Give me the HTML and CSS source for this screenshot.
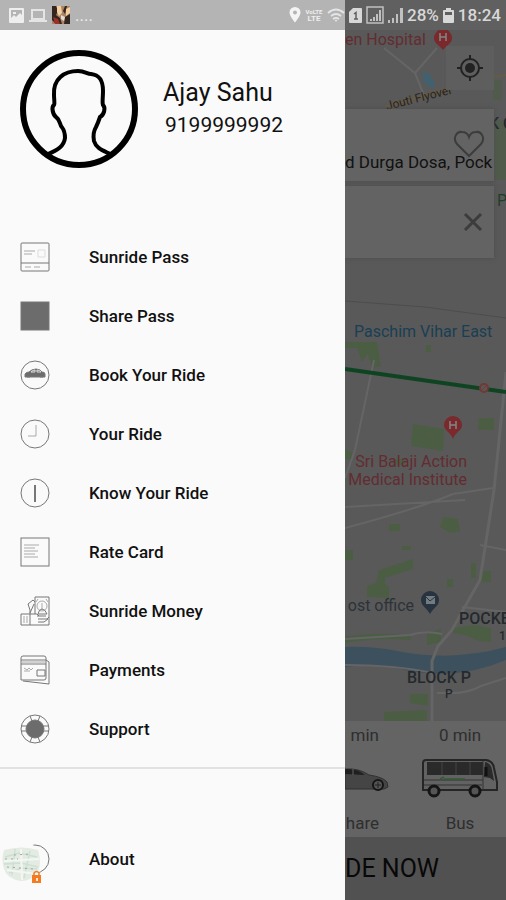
FILE: index.html
```html
<!DOCTYPE html>
<html lang="en">
<head>
    <meta charset="UTF-8">
    <meta name="viewport" content="width=device-width, initial-scale=1.0">
    <title>Sunride</title>
    <link rel="stylesheet" href="styles.css">
</head>
<body>
    <div class="app">
        <header class="status">
            <div class="status-left">
                <svg width="15" height="15" viewBox="0 0 15 15"><path fill="#eee" fill-rule="evenodd" d="M1 0h13q1 0 1 1v13q0 1-1 1H1q-1 0-1-1V1q0-1 1-1zM2 2v8l3-3 2 2 4-4 2 2V2z"/><path fill="#eee" d="M4 4h3v2H4z"/></svg>
                <svg width="18" height="15" viewBox="0 0 18 15"><path fill="none" stroke="#e4e4e4" stroke-width="2" d="M3 2h12v9H3z"/><path fill="#e4e4e4" d="M0 12h18v2H0z"/></svg>
                <svg width="18" height="18" viewBox="0 0 18 18"><path fill="#a98566" d="M0 0h18v18H0z"/><path fill="#34251f" d="M0 0h4l2 5-2 4 4 3 2 6H4L0 14zM13 0h2l-2 8-2-3zM13 11l5-3v10h-6z"/><path fill="#f3cfa2" d="M5 0h4l1 7-3 3-2-4zM14 3l4-2v6l-4 3z"/><path fill="#9d302b" d="M1 11l5 2 2 5H3z"/><path fill="#e8ddd4" d="M9 9l4 2-1 4-3-2z"/></svg>
                <span class="dots">....</span>
                <svg class="pin" width="12" height="16" viewBox="0 0 12 16"><path fill="#f4f4f4" fill-rule="evenodd" d="M6 0a5.500 5.500 0 0 1 5.500 5.500C11.500 9 6 15.500 6 15.500S.5 9 .5 5.500A5.500 5.500 0 0 1 6 0zm0 3.500a2 2 0 1 0 0 4 2 2 0 0 0 0-4z"/></svg>
                <span class="lte"><span>VoLTE</span><span>LTE</span></span>
                <svg width="18" height="15" viewBox="0 0 18 15"><g fill="none" stroke="#e4e4e4" stroke-width="1.800"><path d="M1 5q8-7 16 0M4 8q5-4 10 0M6 11q3-2 6 0"/></g><path fill="#e4e4e4" d="M7.500 12h3L9 14z"/></svg>
            </div>
            <div class="status-right">
                <svg width="13" height="15" viewBox="0 0 13 15"><path fill="#d8d8d8" d="M4 0h8q1 0 1 1v13q0 1-1 1H1q-1 0-1-1V4z"/><path fill="none" stroke="#606060" stroke-width="1.500" d="M5 6l2-1.500V11M5 11h4"/></svg>
                <svg width="18" height="18" viewBox="0 0 18 18"><path fill="none" stroke="#c0c0c0" stroke-width="1.500" d="M1 1h16v16H1z"/><path fill="#c0c0c0" d="M4 13h2v2H4zM7 11h2v4H7zM10 8h2v7h-2zM13 4h2v11h-2z"/></svg>
                <svg width="15" height="15" viewBox="0 0 15 15"><path fill="#c0c0c0" d="M0 12h2v3H0zM4 10h2v5H4zM8 6h2v9H8zM12 0h3v15h-3z"/></svg>
                <span>28%</span>
                <svg width="11" height="15" viewBox="0 0 11 15"><path fill="#d8d8d8" fill-rule="evenodd" d="M3 0h5v2h2q1 0 1 1v11q0 1-1 1H1q-1 0-1-1V3q0-1 1-1h2zM2 4v3h7V4z"/></svg>
                <span>18:24</span>
            </div>
        </header>

        <nav class="drawer">
            <div class="profile">
                <svg class="avatar" width="118" height="118" viewBox="0 0 118 118">
                    <circle cx="59" cy="59" r="56" fill="none" stroke="#000" stroke-width="6"/>
                    <path fill="none" stroke="#000" stroke-width="4" d="M28 104C38 100 44 96 45 88C45 80 43 79 41 76C39 71 39 69 36 67C33 65 31 57 34 55C35 53 34 50 34 45C33 29 44 21 58 21C65 21 67 24 71 24C80 25 83 31 83 41C83 48 82 52 83 55C86 58 84 65 80 67C79 70 78 73 76 77C73 82 73 86 74 91C76 98 82 100 90 104"/>
                </svg>
                <div class="profile-text">
                    <div class="name">Ajay Sahu</div>
                    <div class="phone">9199999992</div>
                </div>
            </div>

            <div class="menu">
                <a class="item" href="#">
                    <svg class="icon" viewBox="0 0 30 30"><rect x="1" y="1" width="28" height="28" rx="1"/><path d="M1 21h28"/><path class="faint" d="M4 9h11M4 12h8M5 25h6M14 25h6"/><path class="pale" d="M18 8h7v7h-7z"/></svg>
                    Sunride Pass
                </a>
                <a class="item" href="#">
                    <svg class="icon" viewBox="0 0 30 30"><rect class="solid" x="1" y="1" width="28" height="28"/></svg>
                    Share Pass
                </a>
                <a class="item" href="#">
                    <svg class="icon" viewBox="0 0 30 30"><circle cx="15" cy="15" r="14"/><path class="solid" d="M5 14q1-2 4-2 3-3 7-3 4 0 6 3 3 0 3 2v3H5z"/><path class="pale" d="M11 12q2-2 4-2v2zM17 10q3 0 4 2h-4z"/><path d="M7 17h3M20 17h3"/></svg>
                    Book Your Ride
                </a>
                <a class="item" href="#">
                    <svg class="icon" viewBox="0 0 30 30"><circle cx="15" cy="15" r="14"/><path class="faint" d="M16 6v11H8"/></svg>
                    Your Ride
                </a>
                <a class="item" href="#">
                    <svg class="icon" viewBox="0 0 30 30"><circle cx="15" cy="15" r="14"/><path class="bold" d="M15 7v17"/></svg>
                    Know Your Ride
                </a>
                <a class="item" href="#">
                    <svg class="icon" viewBox="0 0 30 30"><rect x="1" y="1" width="28" height="28"/><path class="faint" d="M4 8h15M4 11h11M4 14h14M4 17h11M4 20h14"/></svg>
                    Rate Card
                </a>
                <a class="item" href="#">
                    <svg class="icon" viewBox="0 0 30 30"><path d="M15 18V1h14v28H1V18h9v-4l-2-6 5-4 2 2M10 17l4-9M10 18v11M10 18h7l2 2"/><circle class="faint" cx="22" cy="10" r="5"/><path class="faint" d="M18 3l-2 3M26 3l2 3M22 7v6M4 20v7M7 20v7"/><path d="M18 18q1-5 4-5t5 5zM17 20h9M18 23h9l2-2M18 26h6l4-3"/></svg>
                    Sunride Money
                </a>
                <a class="item" href="#">
                    <svg class="icon" viewBox="0 0 30 30"><path d="M1 3q0-2 2-2h21q2 0 2 2v20q0 2-2 2H1zM1 5h25M1 9h25M26 5l3 2v22L3 26"/><path class="faint" d="M1 7h25M4 13l3 2 2-2 2 2 2-2M4 16h6"/><path d="M17 15h8v6h-8z"/></svg>
                    Payments
                </a>
                <a class="item" href="#">
                    <svg class="icon" viewBox="0 0 30 30"><circle cx="15" cy="15" r="14"/><circle class="solid" cx="15" cy="15" r="9"/><path d="M1 12h5M1 17h5M24 12h5M24 17h5M10 2l2 5M20 2l-2 5M10 28l2-5M20 28l-2-5"/></svg>
                    Support
                </a>
            </div>

            <div class="menu-bottom">
                <a class="item" href="#">
                    <svg class="icon" viewBox="0 0 30 30"><circle cx="15" cy="15" r="14"/></svg>
                    About
                    <!-- floating map bubble -->
                    <svg class="bubble" width="44" height="44" viewBox="0 0 44 44"><circle cx="20" cy="21" r="20" fill="#fafafa"/><path fill="#e3ebe3" d="M2 9q18-5 34 0 4 13 0 22-7 9-17 9Q5 38 2 28-1 18 2 9z"/><path fill="none" stroke="#cde0d2" stroke-width="1.500" d="M3 16l14-4 18 4M2 23l17-1 17 4M7 32l12-5 16 1M13 8l-3 26M28 10l-6 27"/><path fill="none" stroke="#f4f6f4" stroke-width="2" d="M2 20l35-2M5 29l30 4M19 8l1 31"/><path fill="none" stroke="#9eaaa1" stroke-dasharray="2 4" d="M3 18h13M5 26l27 2M12 14l16-1"/><path fill="#f47b20" d="M30 34h9v8h-9z"/><path fill="none" stroke="#f47b20" stroke-width="1.500" d="M32 34v-2q2.500-3 5 0v2"/><path fill="#ffe6cf" d="M34 37h2v3h-2z"/></svg>
                </a>
            </div>
        </nav>

        <main class="ride">
            <section class="map">
                <svg class="map-art" viewBox="0 0 161 691" preserveAspectRatio="xMinYMin slice">
                    <rect width="161" height="691" fill="#595959"/>
                    <!-- parks -->
                    <g fill="#4b5e44">
                        <path d="M148 50h9l-1 20h-8zM149 90h12v60h-12z" opacity=".6"/>
                        <path d="M0 312h32l4 24-9 2-4-14-6 8-5-14H0zM68 394l31 5-1 22-32-5zM134 388h15v12h-16zM0 420l7 2v7H0zM81 315h5v7h-5zM48 429h12v6H48z"/>
                        <path d="M98 487l15 2 2 12-10 2-10-6zM44 494h11v7H44zM34 540l34-11v10l-28 9v6l4 3v11l-22-1v-11l9-3zM57 516h9v4h-9zM136 541h10v11h-10zM126 533h5v15h-5zM102 549h6v8h-6zM0 520h8v10H0z"/>
                        <path d="M0 607q35-6 66-1v4q-33-3-66 3zM82 603l14-4v13l-14 3zM108 598l22-3 16 3v14l-12-1-14-6-12-2zM65 664h18v12l-18-3zM39 682l43-2v11H39z"/>
                    </g>
                    <!-- canal -->
                    <path fill="#3d505e" d="M0 617q25-1 52 4 55 11 109-4v13q-52 22-105 9-29-6-56-2z"/>
                    <path fill="#43606f" d="M77 42l8 2 5 10-2 5-9-6z"/>
                    <!-- roads -->
                    <g fill="none" stroke="#656565" stroke-width="2">
                        <path d="M39 18l31 25 22-25M70 43l9 22M29 330L10 420 0 448"/>
                        <path stroke-width="3" d="M161 342l-12 118-14 90-8 14-20 36-14 16-6 15v60"/>
                        <path d="M0 498q75-20 108-34l40-6M0 609l65-4q15-5 32-1M117 577l44 5M135 515l26 5M0 635q50 0 88 8M92 663h16q15 0 28-7l25-8M0 477l120-7"/>
                    </g>
                    <path fill="none" stroke="#4d4d4d" d="M0 271l80 6 81 11"/>
                    <path fill="none" stroke="#665b45" stroke-width="2" d="M40 77q36-10 67-20 25-8 54-12"/>
                    <path fill="none" stroke="#0f4422" stroke-width="4" d="M0 339l161 23"/>
                    <circle cx="139" cy="358" r="4" fill="#595959" stroke="#733735" stroke-width="2"/>
                    <path stroke="#733735" d="M137 360l4-4"/>
                    <!-- pins -->
                    <path fill="#7a292c" d="M98-1a9 9 0 0 1 9 9c0 5-4 6-9 12-5-6-9-7-9-12a9 9 0 0 1 9-9zM108 386a9 9 0 0 1 9 9c0 6-6 6-9 14-3-8-9-8-9-14a9 9 0 0 1 9-9z"/>
                    <path fill="none" stroke="#858585" stroke-width="1.500" d="M95 3v8M101 3v8M95 7h6M105 391v8M111 391v8M105 395h6"/>
                    <path fill="#27333f" d="M85 561a9 9 0 0 1 9 9c0 6-6 8-9 14-3-6-9-8-9-14a9 9 0 0 1 9-9z"/>
                    <path fill="#727c80" d="M81 566h9v8h-9z"/>
                    <path fill="none" stroke="#27333f" d="M81 567l4 4 5-4"/>
                    <!-- labels -->
                    <g class="map-label">
                        <text class="red" x="0" y="15">en Hospital</text>
                        <text class="small" x="42" y="80" transform="rotate(-14 42 80)">Jouti Flyover</text>
                        <text class="dark" x="144" y="99">K C</text>
                        <text class="green" x="152" y="176">P</text>
                        <text class="blue" x="9" y="307">Paschim Vihar East</text>
                        <text class="red" x="122" y="437" text-anchor="end">Sri Balaji Action</text>
                        <text class="red" x="122" y="455" text-anchor="end">Medical Institute</text>
                        <text class="slate" x="69" y="581" text-anchor="end">ost office</text>
                        <text class="dark" x="114" y="594">POCKE</text>
                        <text class="dark small-plain" x="154" y="610">1</text>
                        <text class="dark" x="62" y="653">BLOCK P</text>
                        <text class="dark small-plain" x="100" y="668">P</text>
                    </g>
                </svg>
                <div class="map-top">
                    <button class="locate" aria-label="My location">
                        <svg width="28" height="28" viewBox="0 0 28 28"><circle cx="14" cy="14" r="9" fill="none" stroke="#222" stroke-width="2"/><circle cx="14" cy="14" r="5" fill="#222"/><path stroke="#222" stroke-width="2" d="M14 1v5M14 22v5M1 14h5M22 14h5"/></svg>
                    </button>
                    <div class="place pickup">
                        <input type="text" aria-label="Pickup" value="d Durga Dosa, Pock">
                        <button class="heart" aria-label="Favourite">
                            <svg width="32" height="28" viewBox="0 0 32 28"><path fill="none" stroke="#3c3c3c" stroke-width="2" d="M16 26L4 14C-1 8 4 1 9 2c4 0 6 2 7 5 1-3 3-5 7-5 5-1 10 6 5 12z"/></svg>
                        </button>
                    </div>
                    <div class="place drop">
                        <input type="text" aria-label="Drop">
                        <button class="clear" aria-label="Clear">
                            <svg width="20" height="20" viewBox="0 0 20 20"><path stroke="#3c3c3c" stroke-width="3" d="M2 2l16 16M18 2L2 18"/></svg>
                        </button>
                    </div>
                </div>
            </section>
            <section class="types">
                <button class="type share">
                    <span>min</span>
                    <svg width="44" height="40" viewBox="0 0 44 40"><path fill="#454545" stroke="#303030" d="M0 10q14-1 24 6 14 2 18 7l1 5-4 2H0z"/><path fill="#1f1f1f" d="M0 10q12-1 20 6L0 15z"/><path stroke="#656565" d="M8 10v6"/><circle cx="33" cy="26" r="5" fill="#555" stroke="#151515" stroke-width="2"/><path stroke="#222" d="M30 26h6M33 23v6"/></svg>
                    <span>hare</span>
                </button>
                <button class="type">
                    <span>0 min</span>
                    <svg width="76" height="40" viewBox="0 0 76 40"><path fill="#626262" stroke="#252525" stroke-width="2" d="M4 1h60q7 1 8 8l3 14v8H1V4q0-3 3-3z"/><path fill="#2a2a2a" d="M5 3h56v13H5zM63 3q6 1 7 8l2 11-4-3-6-1z"/><path stroke="#444" d="M20 3v13M34 3v13M48 3v13"/><path stroke="#333" d="M2 21h59M61 2v29M2 26h58"/><path stroke="#315c35" stroke-width="1.500" d="M18 20l4-2M22 20h21"/><path stroke="#111" stroke-width="3" d="M64 8v9"/><g fill="#555" stroke="#151515" stroke-width="3"><circle cx="12" cy="32" r="5"/><circle cx="53" cy="32" r="5"/></g></svg>
                    <span>Bus</span>
                </button>
            </section>
            <button class="ride-now">DE NOW</button>
        </main>
    </div>
</body>
</html>
```
FILE: styles.css
```css
* {
    box-sizing: border-box;
}

body {
    margin: 0;
    font-family: Roboto, "Liberation Sans", sans-serif;
    color: #111;
}

button,
input {
    border: none;
    background: none;
    padding: 0;
    font: inherit;
    color: inherit;
}

button {
    cursor: pointer;
}

svg {
    display: block;
    flex-shrink: 0;
}

.app {
    display: grid;
    grid-template-columns: 15fr 7fr;
    grid-template-rows: 30px 1fr;
    min-height: 100vh;
}

/* status bar */
.status {
    grid-column: 1 / 3;
    display: grid;
    grid-template-columns: subgrid;
}

.status-left,
.status-right {
    display: flex;
    align-items: center;
    min-width: 0;
}

.status-left {
    background-color: #b4b4b4;
    gap: 5px;
    padding-left: 9px;
}

.dots {
    color: #eee;
    font-size: 17px;
}

.pin {
    margin-left: auto;
}

.lte {
    display: flex;
    flex-direction: column;
    align-items: center;
    width: 16px;
    color: #eee;
    font-size: 8px;
    font-weight: 700;
    line-height: 7px;
}

.lte span:first-child {
    font-size: 6px;
}

.status-right {
    background-color: #606060;
    color: #d8d8d8;
    font-size: 17px;
    font-weight: 500;
    gap: 4px;
    padding-left: 4px;
    white-space: nowrap;
}

/* drawer */
.drawer {
    background-color: #fafafa;
    display: flex;
    flex-direction: column;
}

.profile {
    display: flex;
    align-items: center;
    gap: 25px;
    padding: 20px 20px 59px;
}

.name {
    font-size: 25px;
    line-height: 32px;
}

.phone {
    font-size: 21px;
    line-height: 32px;
    padding-left: 2px;
}

.item {
    position: relative;
    display: flex;
    align-items: center;
    gap: 39px;
    height: 59px;
    padding-left: 20px;
    color: #111;
    font-size: 17px;
    font-weight: 500;
    text-decoration: none;
}

.icon {
    width: 30px;
    height: 30px;
    fill: none;
    stroke: #777;
    stroke-width: 1;
}

.icon .faint {
    stroke: #aaa;
}

.icon .pale {
    stroke: #ddd;
}

.icon .bold {
    stroke-width: 2;
}

.icon .solid {
    fill: #6c6c6c;
}

.menu-bottom {
    flex: 1;
    margin-top: 9px;
    padding-top: 60px;
    border-top: 2px solid #e2e2e2;
}

.bubble {
    position: absolute;
    left: 2px;
    top: 12px;
}

/* dimmed booking screen */
.ride {
    display: flex;
    flex-direction: column;
    min-width: 0;
    overflow: hidden;
    background-color: #595959;
}

.map {
    position: relative;
    flex: 1;
    overflow: hidden;
}

.map-art {
    position: absolute;
    width: 100%;
    height: 100%;
}

.map-label {
    font-size: 16px;
}

.red {
    fill: #632c31;
}

.blue {
    fill: #193f54;
}

.slate {
    fill: #2c3338;
}

.dark {
    fill: #24292d;
    font-weight: 500;
}

.green {
    fill: #1f4028;
}

.small {
    fill: #2c2415;
    font-size: 12px;
}

.map-label .small-plain {
    font-size: 12px;
}

.map-top {
    position: relative;
    display: flex;
    flex-direction: column;
    padding: 16px 12px 0 0;
}

.locate {
    display: flex;
    align-items: center;
    justify-content: center;
    align-self: flex-end;
    width: 48px;
    height: 44px;
    margin-bottom: 19px;
    background-color: #5e5e5e;
}

.place {
    display: grid;
    height: 72px;
    margin-bottom: 5px;
    background-color: #636363;
    box-shadow: 0 0 4px #4c4c4c;
}

.place input,
.place button {
    grid-area: 1 / 1;
    min-width: 0;
}

.place input {
    width: 100%;
    font-size: 17px;
}

.pickup input {
    align-self: end;
    height: 20px;
    margin-bottom: 9px;
}

.heart {
    place-self: start end;
    margin: 21px 9px 0 0;
}

.clear {
    place-self: center end;
    margin-right: 11px;
}

.types {
    display: grid;
    grid-template-columns: 3fr 4fr;
    background-color: #646464;
    height: 116px;
}

.type {
    display: flex;
    flex-direction: column;
    align-items: center;
    justify-content: space-between;
    padding: 4px 0;
    color: #2e2e2e;
    font-size: 17px;
}

.share {
    align-items: flex-start;
}

.share span {
    width: 34px;
    text-align: right;
}

.ride-now {
    height: 63px;
    background-color: #515151;
    color: #080808;
    font-size: 25px;
    text-align: left;
}
```
